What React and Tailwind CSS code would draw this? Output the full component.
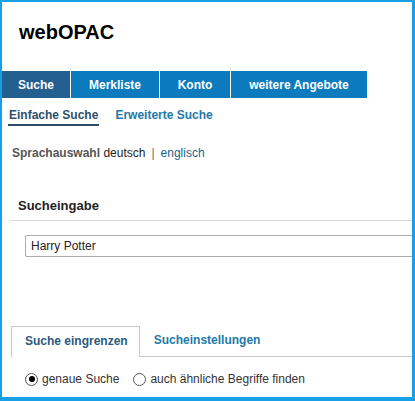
export default function App() {
  const font = { fontFamily: '"Liberation Sans", Arial, sans-serif' };
  return (
    <div
      className="w-[415px] h-[401px] overflow-hidden bg-white border-l-2 border-t-2 border-r-[3px] border-b-[4px] border-[#17a0e6]"
      style={font}
    >
      <div className="pt-[18px] pl-[17px] text-[20px] leading-[24px] font-bold text-black">webOPAC</div>

      <nav className="mt-[27px] flex h-[27px] text-[12px] font-bold text-white">
        <div className="w-[69px] flex items-center justify-center bg-[#23608f] border-r border-white">Suche</div>
        <div className="w-[89px] flex items-center justify-center bg-[#0b7bbd] border-r border-white">Merkliste</div>
        <div className="w-[71px] flex items-center justify-center bg-[#0b7bbd] border-r border-white">Konto</div>
        <div className="w-[136px] flex items-center justify-center bg-[#0b7bbd]">weitere Angebote</div>
      </nav>

      <div className="flex pl-[6px] pt-[10px] text-[12px] leading-[14px] font-bold">
        <div className="px-[1px] pb-[2px] border-b-2 border-[#2f4d66] text-[#2f4f6b]">Einfache Suche</div>
        <div className="ml-[15px] px-[1px] text-[#2677a8]">Erweiterte Suche</div>
      </div>

      <div className="mt-[20px] pl-[10px] text-[12px] leading-[14px]">
        <span className="font-bold text-[#555]">Sprachauswahl</span>{" "}
        <span className="text-[#222]">deutsch</span>
        <span className="inline-block mx-[6px] text-[#666]">|</span>
        <span className="text-[#1d5f8e]">englisch</span>
      </div>

      <div className="mt-[38px] ml-[8px] pl-[8px] pb-[6px] border-b border-[#d9d9d9] text-[13px] leading-[16px] font-bold text-[#222]">
        Sucheingabe
      </div>

      <div className="mt-[14px] ml-[23px] w-[420px] h-[22px] border border-[#ababab] rounded-[2px] pl-[5px] flex items-center text-[12px] text-[#222]">
        Harry Potter
      </div>

      <div className="mt-[69px] ml-[9px] flex text-[12px] leading-[14px] font-bold">
        <div className="h-[31px] pl-[13px] pr-[11px] pt-[7px] border-l border-t border-r border-[#c8c8c8] text-[#2c5a7e]">
          Suche eingrenzen
        </div>
        <div className="h-[31px] px-[14px] pt-[7px] border-b border-[#c8c8c8] text-[#2279ab]">Sucheinstellungen</div>
        <div className="flex-1 h-[31px] border-b border-[#c8c8c8]"></div>
      </div>

      <div className="mt-[15px] ml-[23px] flex items-center text-[12px] leading-[14px] text-[#333]">
        <span className="w-[13px] h-[13px] rounded-full border border-[#555] flex items-center justify-center bg-white">
          <span className="w-[6px] h-[6px] rounded-full bg-black"></span>
        </span>
        <span className="ml-[4px]">genaue Suche</span>
        <span className="ml-[14px] w-[13px] h-[13px] rounded-full border border-[#555] bg-white"></span>
        <span className="ml-[4px]">auch ähnliche Begriffe finden</span>
      </div>
    </div>
  );
}
